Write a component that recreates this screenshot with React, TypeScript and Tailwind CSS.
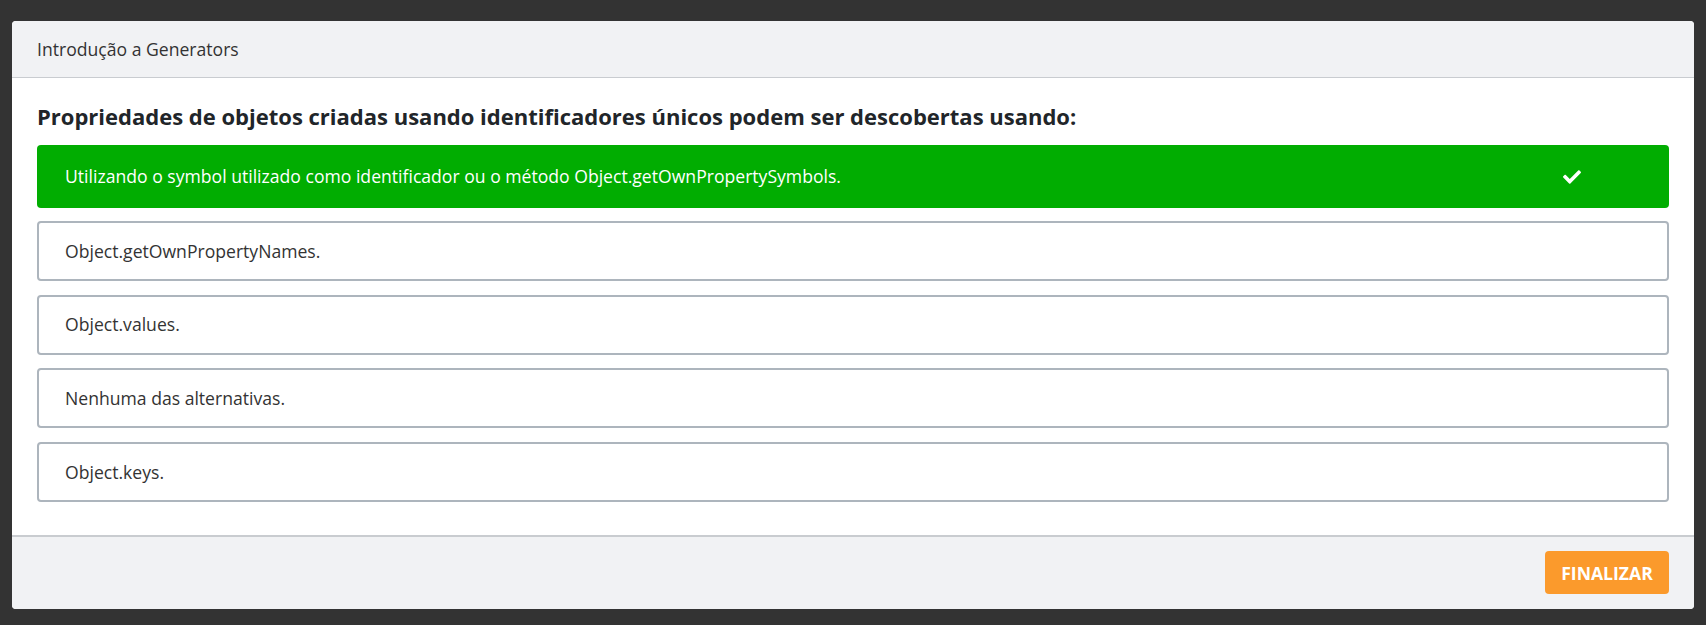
import { FaCheck } from "react-icons/fa";

const opcoes = [
  "Object.getOwnPropertyNames.",
  "Object.values.",
  "Nenhuma das alternativas.",
  "Object.keys.",
];

export default function App() {
  return (
    <main className="min-h-[625px] w-full bg-[#333333] px-[12px] pt-[21px] pb-[17px] font-['Open_Sans',sans-serif]">
      <div className="flex flex-col overflow-hidden rounded-[4px] bg-white">
        <div className="flex h-[57px] items-center border-b border-[#c9ccd0] bg-[#f1f2f4] px-[25px]">
          <span className="text-[17.6px] text-[#333]">Introdução a Generators</span>
        </div>

        <div className="flex flex-col px-[25px] pt-[23px] pb-[33px]">
          <h2 className="mb-[14px] text-[22px] leading-[30px] font-bold text-[#212529]">
            Propriedades de objetos criadas usando identificadores únicos podem ser descobertas usando:
          </h2>

          <div className="flex h-[63px] items-center justify-between rounded-[4px] bg-[#01ad01] pl-[28px] pr-[88px] text-white">
            <span className="text-[17.6px]">
              Utilizando o symbol utilizado como identificador ou o método Object.getOwnPropertySymbols.
            </span>
            <FaCheck size={18} />
          </div>

          <div className="mt-[13px] flex flex-col gap-[13.6px]">
            {opcoes.map((o) => (
              <div
                key={o}
                className="flex h-[60px] items-center rounded-[4px] border-2 border-[#adb5bd] pl-[26px] text-[17.6px] text-[#333]"
              >
                {o}
              </div>
            ))}
          </div>
        </div>

        <div className="flex h-[74px] items-center justify-end border-t-2 border-[#c9ccd0] bg-[#f1f2f4] px-[25px]">
          <button className="h-[43px] w-[124px] rounded-[4px] bg-[#fb9a2c] text-[17.6px] font-bold text-white">
            FINALIZAR
          </button>
        </div>
      </div>
    </main>
  );
}
